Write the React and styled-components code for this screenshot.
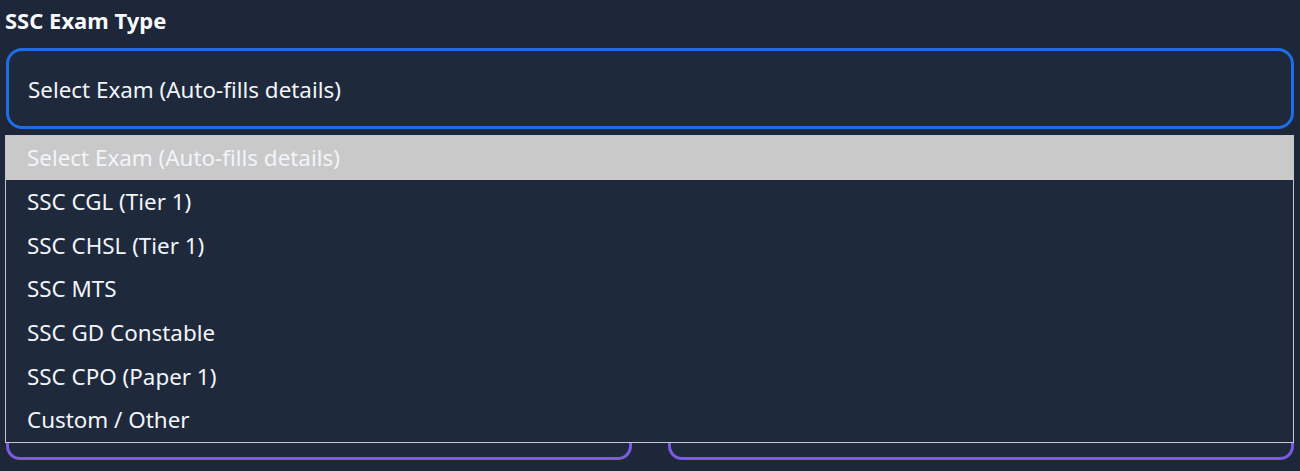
import React from "react";
import styled, { createGlobalStyle } from "styled-components";

const GlobalStyle = createGlobalStyle`
  html, body {
    margin: 0;
    padding: 0;
    background: #1e2739;
  }
  body {
    font-family: "Noto Sans", "Open Sans", sans-serif;
    color: #f1f5f9;
  }
`;

const exams = [
  "Select Exam (Auto-fills details)",
  "SSC CGL (Tier 1)",
  "SSC CHSL (Tier 1)",
  "SSC MTS",
  "SSC GD Constable",
  "SSC CPO (Paper 1)",
  "Custom / Other",
];

const StyledForm = styled.div`
  position: relative;
  padding: 8px 6px 0 6px;
  height: 471px;
  box-sizing: border-box;
  overflow: hidden;
`;

const Label = styled.label`
  display: block;
  margin-left: -1px;
  font-size: 22px;
  font-weight: 700;
  line-height: 24px;
  color: #f8fafc;
`;

const SelectBox = styled.div`
  margin-top: 16px;
  height: 81px;
  box-sizing: border-box;
  border: 3px solid #1c6fe8;
  border-radius: 16px;
  background: #1e293b;
  display: flex;
  align-items: center;
  padding: 2px 19px 0;
  font-size: 22.4px;
  color: #f1f5f9;
`;

const Menu = styled.ul`
  position: absolute;
  top: 135px;
  left: 5px;
  width: 1289px;
  box-sizing: border-box;
  margin: 0;
  padding: 0;
  list-style: none;
  border: 1px solid #c3c7cf;
  background: #1e293b;
  z-index: 10;
`;

const Option = styled.li`
  height: 43.7px;
  display: flex;
  align-items: center;
  padding: 0 21px;
  box-sizing: border-box;
  font-size: 22.4px;
  color: #f1f5f9;
  background: ${(props) => (props.active ? "#c9c9c9" : "transparent")};
`;

const FieldRow = styled.div`
  margin-top: 30px;
  display: grid;
  grid-template-columns: 1fr 1fr;
  gap: 36px;
`;

const FieldInput = styled.div`
  height: 301px;
  box-sizing: border-box;
  border: 3px solid #7b5ce0;
  border-radius: 14px;
  background: #1e293b;
`;

const App = () => {
  return (
    <>
      <GlobalStyle />
      <StyledForm>
        <Label>SSC Exam Type</Label>
        <SelectBox>{exams[0]}</SelectBox>

        <FieldRow>
          <FieldInput />
          <FieldInput />
        </FieldRow>

        <Menu>
          {exams.map((exam, i) => (
            <Option key={exam} active={i === 0}>
              {exam}
            </Option>
          ))}
        </Menu>
      </StyledForm>
    </>
  );
};

export default App;
